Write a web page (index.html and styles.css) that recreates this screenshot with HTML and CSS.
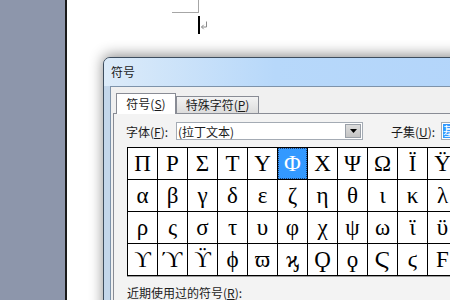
FILE: index.html
```html
<!DOCTYPE html>
<html lang="zh-CN">

<head>
  <meta charset="UTF-8">
  <title>符号</title>
  <link rel="stylesheet" href="styles.css">
</head>

<body>
  <div class="workspace">
    <div class="gutter"></div>

    <div class="page">
      <div class="crop-mark"></div>
      <div class="caret"></div>
      <svg class="para-mark" width="8" height="9" viewBox="0 0 8 9">
        <path d="M6.5 0.5v5.5H1.5M1.5 6l2.2-2.2M1.5 6l2.2 2.2" fill="none" stroke="#8a8a8a" stroke-width="1"/>
      </svg>
    </div>

    <div class="dialog">
      <div class="titlebar">符号</div>

      <div class="client">
        <div class="tabs">
          <div class="tab active">符号(<u>S</u>)</div>
          <div class="tab">特殊字符(<u>P</u>)</div>
        </div>

        <div class="tab-page">
          <div class="font-row">
            <span class="field-label">字体(<u>F</u>):</span>
            <div class="combo font-combo">
              <span class="combo-text">(拉丁文本)</span>
              <span class="drop-btn"><svg width="7" height="4" viewBox="0 0 7 4"><path d="M0 0h7L3.5 4z" fill="#000"/></svg></span>
            </div>
            <span class="field-label subset-label">子集(<u>U</u>):</span>
            <div class="combo subset-combo">
              <span class="combo-sel">基本</span>
            </div>
          </div>

          <div class="symbol-grid">
            <span class="cell">Π</span><span class="cell">Ρ</span><span class="cell">Σ</span><span class="cell">Τ</span>
            <span class="cell">Υ</span><span class="cell selected">Φ</span><span class="cell">Χ</span><span class="cell">Ψ</span>
            <span class="cell">Ω</span><span class="cell">Ϊ</span><span class="cell">Ϋ</span>

            <span class="cell">α</span><span class="cell">β</span><span class="cell">γ</span><span class="cell">δ</span>
            <span class="cell">ε</span><span class="cell">ζ</span><span class="cell">η</span><span class="cell">θ</span>
            <span class="cell">ι</span><span class="cell">κ</span><span class="cell">λ</span>

            <span class="cell">ρ</span><span class="cell">ς</span><span class="cell">σ</span><span class="cell">τ</span>
            <span class="cell">υ</span><span class="cell">φ</span><span class="cell">χ</span><span class="cell">ψ</span>
            <span class="cell">ω</span><span class="cell">ϊ</span><span class="cell">ϋ</span>

            <span class="cell">ϒ</span><span class="cell">ϓ</span><span class="cell">ϔ</span><span class="cell">ϕ</span>
            <span class="cell">ϖ</span><span class="cell">ϗ</span><span class="cell">Ϙ</span><span class="cell">ϙ</span>
            <span class="cell">Ϛ</span><span class="cell">ϛ</span><span class="cell">Ϝ</span>
          </div>

          <div class="recent-label">近期使用过的符号(<u>R</u>):</div>
        </div>
      </div>
    </div>
  </div>
</body>

</html>
```

FILE: styles.css
```css
body {
  margin: 0;
  font-family: "Noto Sans CJK SC", "Liberation Sans", sans-serif;
  font-size: 12px;
  color: #1b1b1b;
  overflow: hidden;
}

.workspace {
  position: relative;
  display: flex;
  height: 300px;
  overflow: hidden;
}

.gutter {
  flex: none;
  width: 65px;
  background-color: #8d96ab;
  border-right: 2px solid #1a1a1a;
}

.page {
  position: relative;
  flex: 1;
  background-color: #fff;
}

.crop-mark {
  position: absolute;
  left: 105px;
  top: -1px;
  width: 26px;
  height: 13px;
  border-right: 1px solid #a6a6a6;
  border-bottom: 1px solid #a6a6a6;
}

.caret {
  position: absolute;
  left: 131px;
  top: 16px;
  width: 2px;
  height: 18px;
  background-color: #000;
}

.para-mark {
  position: absolute;
  left: 133px;
  top: 21px;
}

/* dialog window */
.dialog {
  position: absolute;
  left: 103px;
  top: 57px;
  width: 380px;
  height: 260px;
  display: flex;
  flex-direction: column;
  border: 1px solid #3d4d5e;
  border-radius: 7px 7px 0 0;
  background-color: #c3d6ea;
  box-shadow: 0 -2px 14px rgba(0, 0, 0, 0.45);
}

.titlebar {
  height: 28px;
  line-height: 28px;
  padding-left: 7px;
  border-radius: 6px 6px 0 0;
  background: linear-gradient(to right, #dcebf9, #b7d8fa 45%, #b3d5fa);
}

.client {
  flex: 1;
  margin-left: 6px;
  border-top: 1px solid #7e93aa;
  border-left: 1px solid #7e93aa;
  background-color: #f0f0f0;
}

.tabs {
  position: relative;
  z-index: 1;
  display: flex;
  align-items: flex-end;
  height: 27px;
  box-sizing: border-box;
  padding: 6px 0 0 5px;
  margin-bottom: -1px;
}

.tab {
  box-sizing: border-box;
  height: 17px;
  margin-bottom: 1px;
  border: 1px solid #898c95;
  border-bottom: none;
  background: linear-gradient(#f3f3f3, #dcdcdc);
  text-align: center;
  line-height: 16px;
  width: 83px;
}

.tab.active {
  width: 60px;
  height: 21px;
  margin-bottom: 0;
  background: #fff;
  line-height: 20px;
}

.tab-page {
  margin-left: 2px;
  height: 300px;
  padding: 8px 0 0 12px;
  border: 1px solid #898c95;
  background-color: #f3f3f3;
}

.font-row {
  display: flex;
  align-items: center;
  height: 18px;
}

.field-label {
  width: 50px;
  flex: none;
}

.subset-label {
  margin-left: 28px;
}

.combo {
  box-sizing: border-box;
  display: flex;
  align-items: center;
  height: 18px;
  border: 1px solid #a4abb4;
  background-color: #fff;
  flex: none;
}

.font-combo {
  width: 187px;
}

.combo-text {
  flex: 1;
  padding-left: 1px;
}

.drop-btn {
  box-sizing: border-box;
  display: flex;
  align-items: center;
  justify-content: center;
  width: 16px;
  height: 14px;
  margin-right: 1px;
  border: 1px solid #9aa0a8;
  background: linear-gradient(#dcdcdc, #c4c4c4);
}

.subset-combo {
  width: 100px;
  padding-left: 1px;
}

.combo-sel {
  background-color: #3399ff;
  color: #fff;
  line-height: 14px;
}

.symbol-grid {
  display: grid;
  grid-template-columns: repeat(11, 29px);
  grid-auto-rows: 31px;
  gap: 1px;
  width: max-content;
  margin: 7px 0 0 1px;
  border: 1px solid #000;
  background-color: #000;
  box-shadow: 0 1px 0 #9c9c9c;
}

.cell {
  display: flex;
  align-items: center;
  justify-content: center;
  background-color: #fff;
  color: #000;
  font-family: "Liberation Serif", "DejaVu Serif", serif;
  font-size: 23px;
}

.cell.selected {
  background-color: #3399ff;
  color: #fff;
  outline: 1px dotted #1d3d6d;
  outline-offset: -1px;
}

.recent-label {
  margin-top: 8px;
  margin-left: 1px;
}
```
